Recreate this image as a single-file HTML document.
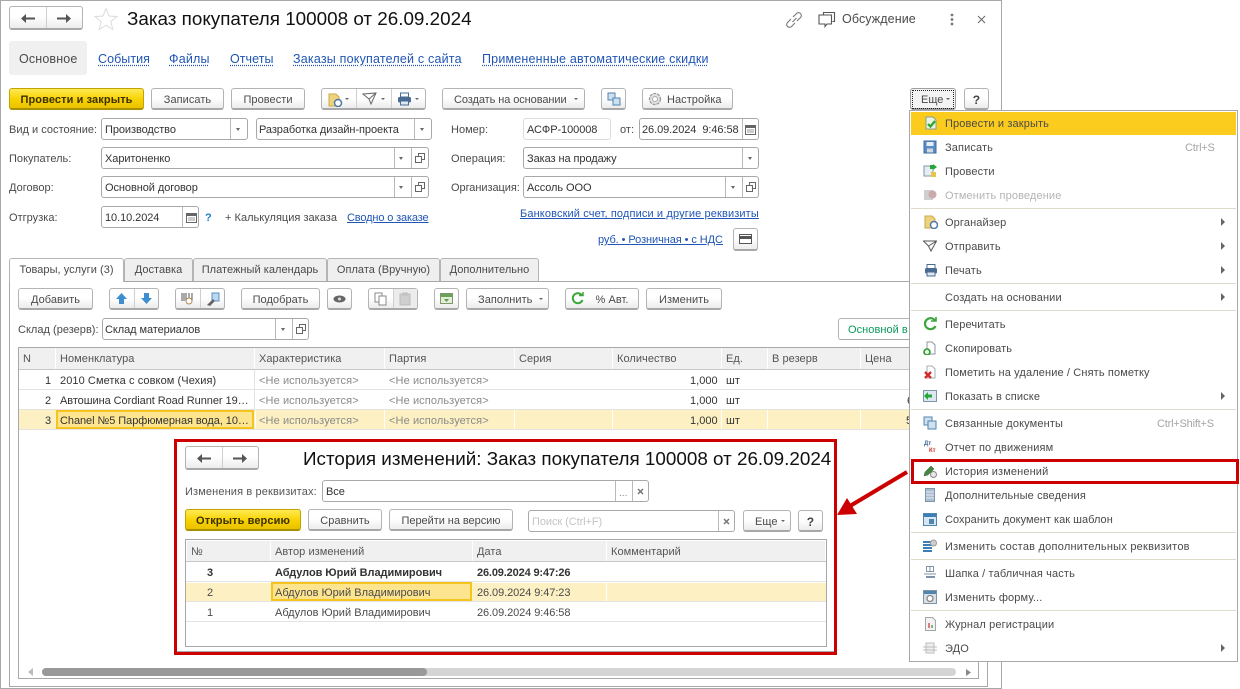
<!DOCTYPE html>
<html lang="ru"><head><meta charset="utf-8"><title>Заказ покупателя</title>
<style>
html,body{margin:0;padding:0;background:#fff}
#p{position:relative;width:1240px;height:689px;overflow:hidden;background:#fff;font:11px/14px "Liberation Sans",Arial,sans-serif;color:#4a4a4a}
#p div,#p span.t,#p svg,#p a{position:absolute}
.t{white-space:nowrap;letter-spacing:.02px;margin-top:1px}
.l{color:#1f55b5;text-decoration:underline;letter-spacing:-.07px}
.d{color:#1f55b5;text-decoration:underline dotted;text-underline-offset:2px;font-size:12.5px}
.b{box-sizing:border-box;border:1px solid #b4b4b4;border-bottom:2px solid #a8a8a8;border-radius:3px;background:linear-gradient(#fff,#fff 45%,#ececec);text-align:center;line-height:22px;white-space:nowrap;letter-spacing:.05px}
.y{border-color:#c4a300;border-bottom-color:#a89000;background:linear-gradient(#ffea55,#f7d200 55%,#eac200);color:#3c3000;font-weight:bold;letter-spacing:.1px}
.f{box-sizing:border-box;border:1px solid #a9a9a9;border-radius:3px;background:#fff;line-height:23px;padding-left:3px;white-space:nowrap;color:#333;letter-spacing:-.07px}
.v{width:1px;background:#b9b9b9}
.c{width:0;height:0;border-left:2.5px solid transparent;border-right:2.5px solid transparent;border-top:3px solid #666}
.w{width:0;height:0;border-top:4px solid transparent;border-bottom:4px solid transparent;border-left:4px solid #666;left:1221px}
.h{background:#f0f0f0;height:20px;line-height:22px;padding-left:4px;box-sizing:border-box;color:#555;letter-spacing:.05px}
.r{height:1px;background:#e3e3e3}
.s{height:1px;background:#e0dccb;left:911px;width:325px}
.t.m{left:945px;color:#4a4a4a;letter-spacing:.13px}
.tab{box-sizing:border-box;top:258px;height:23px;background:#efefef;border:1px solid #b4b4b4;border-bottom:0;border-radius:3px 3px 0 0;text-align:center;line-height:22px;letter-spacing:.04px;white-space:nowrap}
.t.g{color:#8a8a8a;letter-spacing:.1px}
.k{color:#a5a5a5;letter-spacing:-.2px}
</style></head><body><div id="p">

<!-- window frame -->
<div style="left:0;top:0;width:1000px;height:687px;border:1px solid #a8a8a8;border-width:1px 1px 2px 1px;box-sizing:content-box"></div>

<!-- header -->
<div class="b" style="left:9px;top:6px;width:74px;height:24px"></div>
<div class="v" style="left:46px;top:7px;height:21px;background:#cfcfcf"></div>
<svg style="left:21px;top:14px" width="15" height="9"><path d="M0 4.500L5 0V3.500H14V5.500H5V9Z" fill="#555"/></svg>
<svg style="left:57px;top:14px" width="15" height="9"><path d="M14 4.500L9 0V3.500H0V5.500H9V9Z" fill="#555"/></svg>
<svg style="left:94px;top:7px" width="24" height="24"><path d="M12 1.500l3 7.500 8 .6-6.200 5 2 7.900L12 18.200 5.200 22.500l2-7.900L1 9.600l8-.6z" fill="#fff" stroke="#dcdcdc"/></svg>
<span class="t" style="left:127px;top:7px;font-size:18.85px;line-height:22px;color:#111;letter-spacing:0">Заказ покупателя 100008 от 26.09.2024</span>
<svg style="left:785px;top:11px" width="18" height="18" fill="none" stroke="#777" stroke-width="1.100"><path d="M7.500 11l4-4M6 8L2.500 11.500a2.600 2.600 0 0 0 4 4L10 12M8 6l3.500-3.500a2.600 2.600 0 0 1 4 4L12 10"/></svg>
<svg style="left:818px;top:11px" width="18" height="17" fill="none" stroke="#555" stroke-width="1.100"><path d="M5.500 3.500V1.500h11v9h-2M1 4h12.500v9H9l-2 2.500V13H1z" fill="#fff"/></svg>
<span class="t" style="left:842px;top:11px;font-size:12.5px;letter-spacing:.1px">Обсуждение</span>
<svg style="left:949px;top:13px" width="6" height="13" fill="#777"><circle cx="3" cy="2" r="1.400"/><circle cx="3" cy="6.500" r="1.400"/><circle cx="3" cy="11" r="1.400"/></svg>
<svg style="left:977px;top:15px" width="9" height="9" stroke="#666"><path d="M1 1l7 7M8 1L1 8"/></svg>

<!-- page tabs -->
<div style="left:9px;top:41px;width:78px;height:34px;background:#f0f0f0;border-radius:3px"></div>
<span class="t" style="left:19px;top:51px;font-size:12.500px;letter-spacing:.15px">Основное</span>
<span class="t d" style="left:98px;top:51px;letter-spacing:.05px">События</span>
<span class="t d" style="left:169px;top:51px;letter-spacing:.2px">Файлы</span>
<span class="t d" style="left:230px;top:51px;letter-spacing:.05px">Отчеты</span>
<span class="t d" style="left:293px;top:51px;letter-spacing:.2px">Заказы покупателей с сайта</span>
<span class="t d" style="left:482px;top:51px;letter-spacing:.19px">Примененные автоматические скидки</span>

<!-- command bar -->
<div class="b y" style="left:9px;top:88px;width:135px;height:22px">Провести и закрыть</div>
<div class="b" style="left:151px;top:88px;width:73px;height:22px">Записать</div>
<div class="b" style="left:231px;top:88px;width:74px;height:22px">Провести</div>
<div class="b" style="left:321px;top:88px;width:105px;height:22px"></div>
<div class="v" style="left:356px;top:89px;height:19px;background:#cfcfcf"></div>
<div class="v" style="left:391px;top:89px;height:19px;background:#cfcfcf"></div>
<svg style="left:328px;top:93px" width="16" height="14"><path d="M1 1h7l3 3v9H1z" fill="#ecd37c" stroke="#c8a94e"/><circle cx="10" cy="10" r="3.500" fill="#fff" stroke="#4f77a8" stroke-width="1.500"/></svg>
<div class="c" style="left:345px;top:98px;border-left-width:2px;border-right-width:2px;border-top-width:2px"></div>
<svg style="left:362px;top:92px" width="16" height="14" fill="none" stroke="#666"><path d="M1 2l13-1-5 11-2-5zM7 7l7-6"/></svg>
<div class="c" style="left:381px;top:98px;border-left-width:2px;border-right-width:2px;border-top-width:2px"></div>
<svg style="left:397px;top:92px" width="15" height="14"><rect x="3.500" y="1" width="8" height="4" fill="#fff" stroke="#4a6c93"/><rect x="1" y="5" width="13" height="5.500" rx="1.500" fill="#4a6c93"/><rect x="3.500" y="9" width="8" height="4" fill="#dfe7f0" stroke="#4a6c93"/></svg>
<div class="c" style="left:415px;top:98px;border-left-width:2px;border-right-width:2px;border-top-width:2px"></div>
<div class="b" style="left:442px;top:88px;width:143px;height:22px;text-align:left;padding-left:11px;letter-spacing:-.08px">Создать на основании</div>
<div class="c" style="left:574px;top:98px;border-left-width:2px;border-right-width:2px;border-top-width:2px"></div>
<div class="b" style="left:601px;top:88px;width:25px;height:22px"></div>
<svg style="left:607px;top:92px" width="14" height="14"><rect x="1" y="1" width="7" height="7" fill="#cfe0ee" stroke="#4f86b0"/><rect x="6" y="6" width="7" height="7" fill="#cfe0ee" stroke="#4f86b0"/></svg>
<div class="b" style="left:642px;top:88px;width:91px;height:22px;text-align:left;padding-left:24px">Настройка</div>
<svg style="left:648px;top:92px" width="14" height="14"><circle cx="7" cy="7" r="5.500" fill="#e4e4e4" stroke="#9a9a9a" stroke-width="1.300" stroke-dasharray="3 1"/><circle cx="7" cy="7" r="2.500" fill="#fff" stroke="#aaa"/></svg>
<div class="b" style="left:910px;top:88px;width:46px;height:22px;background:#f3f3f3;border-color:#9e9e9e"></div>
<div style="left:912px;top:90px;width:40px;height:17px;border:1px dotted #222"></div>
<span class="t" style="left:921px;top:92px">Еще</span>
<div class="c" style="left:946px;top:98px;border-left-width:2px;border-right-width:2px;border-top-width:2px"></div>
<div class="b" style="left:964px;top:88px;width:25px;height:22px;font-weight:bold;font-size:12px;color:#444">?</div>

<!-- form labels -->
<span class="t" style="left:9px;top:122px">Вид и состояние:</span>
<span class="t" style="left:9px;top:151px">Покупатель:</span>
<span class="t" style="left:9px;top:180px">Договор:</span>
<span class="t" style="left:9px;top:210px">Отгрузка:</span>
<span class="t" style="left:451px;top:122px">Номер:</span>
<span class="t" style="left:451px;top:151px">Операция:</span>
<span class="t" style="left:451px;top:180px;letter-spacing:-.05px">Организация:</span>
<span class="t" style="left:620px;top:122px">от:</span>

<!-- fields -->
<div class="f" style="left:101px;top:118px;width:147px;height:22px">Производство</div><div class="v" style="left:230px;top:119px;height:20px"></div><div class="c" style="left:236px;top:128px"></div>
<div class="f" style="left:256px;top:118px;width:176px;height:22px;padding-left:2px">Разработка дизайн-проекта</div><div class="v" style="left:414px;top:119px;height:20px"></div><div class="c" style="left:420px;top:128px"></div>
<div class="f" style="left:101px;top:147px;width:328px;height:22px">Харитоненко</div><div class="v" style="left:394px;top:148px;height:20px"></div><div class="v" style="left:411px;top:148px;height:20px"></div><div class="c" style="left:399px;top:157px"></div>
<svg style="left:415px;top:153px" width="10" height="10" fill="#fff" stroke="#666"><rect x="3.500" y=".5" width="6" height="6"/><rect x=".5" y="3.500" width="6" height="6"/></svg>
<div class="f" style="left:101px;top:176px;width:328px;height:22px">Основной договор</div><div class="v" style="left:394px;top:177px;height:20px"></div><div class="v" style="left:411px;top:177px;height:20px"></div><div class="c" style="left:399px;top:186px"></div>
<svg style="left:415px;top:182px" width="10" height="10" fill="#fff" stroke="#666"><rect x="3.500" y=".5" width="6" height="6"/><rect x=".5" y="3.500" width="6" height="6"/></svg>
<div class="f" style="left:101px;top:206px;width:98px;height:22px">10.10.2024</div><div class="v" style="left:182px;top:207px;height:20px"></div>
<svg style="left:186px;top:212px" width="11" height="11"><rect x=".5" y="1.500" width="10" height="9" fill="#fff" stroke="#666"/><rect x="1" y="1" width="9" height="3" fill="#666"/><path d="M2 6h7M2 8h7" stroke="#999"/></svg>
<span class="t" style="left:205px;top:210px;color:#1b7fc4;font-weight:bold">?</span>
<span class="t" style="left:225px;top:210px">+ Калькуляция заказа</span>
<span class="t l" style="left:347px;top:210px;letter-spacing:-.14px">Сводно о заказе</span>

<div class="f" style="left:523px;top:118px;width:88px;height:22px;border-color:#dcdcdc">АСФР-100008</div>
<div class="f" style="left:639px;top:118px;width:120px;height:22px;padding-left:2px;">26.09.2024&nbsp; 9:46:58</div><div class="v" style="left:742px;top:119px;height:20px"></div>
<svg style="left:745px;top:124px" width="11" height="11"><rect x=".5" y="1.500" width="10" height="9" fill="#fff" stroke="#666"/><rect x="1" y="1" width="9" height="3" fill="#666"/><path d="M2 6h7M2 8h7" stroke="#999"/></svg>
<div class="f" style="left:523px;top:147px;width:236px;height:22px">Заказ на продажу</div><div class="v" style="left:742px;top:148px;height:20px"></div><div class="c" style="left:748px;top:157px"></div>
<div class="f" style="left:523px;top:176px;width:236px;height:22px">Ассоль ООО</div><div class="v" style="left:725px;top:177px;height:20px"></div><div class="v" style="left:742px;top:177px;height:20px"></div><div class="c" style="left:731px;top:186px"></div>
<svg style="left:746px;top:182px" width="10" height="10" fill="#fff" stroke="#666"><rect x="3.500" y=".5" width="6" height="6"/><rect x=".5" y="3.500" width="6" height="6"/></svg>
<span class="t l" style="left:520px;top:206px;letter-spacing:.13px">Банковский счет, подписи и другие реквизиты</span>
<span class="t l" style="left:598px;top:232px;letter-spacing:-.08px">руб. • Розничная • с НДС</span>
<div class="b" style="left:733px;top:228px;width:25px;height:23px"></div>
<svg style="left:739px;top:234px" width="13" height="11"><rect x=".5" y=".5" width="12" height="9" fill="#fff" stroke="#555"/><rect x="1" y="2" width="11" height="3" fill="#555"/></svg>

<!-- tabs -->
<div style="left:9px;top:281px;width:979px;height:406px;box-sizing:border-box;border:1px solid #a8a8a8"></div>
<div class="tab" style="left:9px;width:115px;background:#fff;height:24px;z-index:2">Товары, услуги (3)</div>
<div class="tab" style="left:124px;width:69px">Доставка</div>
<div class="tab" style="left:193px;width:134px">Платежный календарь</div>
<div class="tab" style="left:327px;width:113px">Оплата (Вручную)</div>
<div class="tab" style="left:440px;width:99px">Дополнительно</div>

<!-- table toolbar -->
<div class="b" style="left:18px;top:288px;width:75px;height:22px">Добавить</div>
<div class="b" style="left:109px;top:288px;width:50px;height:22px"></div><div class="v" style="left:134px;top:289px;height:19px;background:#cfcfcf"></div>
<svg style="left:116px;top:293px" width="11" height="11" fill="#3c8ed0"><path d="M5.500 0L11 6H8v5H3V6H0z"/></svg>
<svg style="left:141px;top:293px" width="11" height="11" fill="#3c8ed0"><path d="M5.500 11L11 5H8V0H3v5H0z"/></svg>
<div class="b" style="left:175px;top:288px;width:50px;height:22px"></div><div class="v" style="left:200px;top:289px;height:19px;background:#cfcfcf"></div>
<svg style="left:181px;top:292px" width="14" height="14"><path d="M1 1v8M3 1v8M5 1v8M8 1v8M11 1v8" stroke="#555"/><circle cx="8" cy="9" r="3" fill="#fff" stroke="#b08a50"/></svg>
<svg style="left:206px;top:292px" width="14" height="14"><rect x="6" y="1" width="7" height="8" fill="#bcd7ef" stroke="#5c92c4"/><path d="M1 13l6-6 2 2-5 5z" fill="#666"/></svg>
<div class="b" style="left:241px;top:288px;width:79px;height:22px">Подобрать</div>
<div class="b" style="left:327px;top:288px;width:25px;height:22px"></div>
<svg style="left:333px;top:295px" width="13" height="8"><ellipse cx="6.500" cy="4" rx="6" ry="3.500" fill="#666"/><circle cx="6.500" cy="4" r="1.500" fill="#ddd"/></svg>
<div class="b" style="left:368px;top:288px;width:50px;height:22px"></div>
<div style="left:394px;top:289px;width:23px;height:19px;background:#ececec"></div>
<div class="v" style="left:393px;top:289px;height:19px;background:#cfcfcf"></div>
<svg style="left:374px;top:292px" width="14" height="14" fill="#fff" stroke="#888"><rect x="1" y="1" width="7" height="9"/><rect x="5" y="4" width="7" height="9"/></svg>
<svg style="left:399px;top:292px" width="13" height="14" fill="#cfcfcf" stroke="#bbb"><rect x="1" y="2" width="10" height="11"/><rect x="4" y="1" width="4" height="2"/></svg>
<div class="b" style="left:434px;top:288px;width:25px;height:22px"></div>
<svg style="left:440px;top:293px" width="13" height="11"><rect x=".5" y=".5" width="12" height="10" fill="#e3ecd8" stroke="#7f9a6a"/><rect x="1" y="1" width="11" height="3" fill="#69a456"/><path d="M4 6h5L6.500 9z" fill="#5d9a4a"/></svg>
<div class="b" style="left:466px;top:288px;width:83px;height:22px;text-align:left;padding-left:11px">Заполнить</div>
<div class="c" style="left:539px;top:298px;border-left-width:2px;border-right-width:2px;border-top-width:2px"></div>
<div class="b" style="left:565px;top:288px;width:74px;height:22px;padding-left:20px">% Авт.</div>
<svg style="left:571px;top:292px" width="13" height="13" fill="none" stroke="#3aa63a" stroke-width="2"><path d="M11 3.500A5 5 0 1 0 11.500 8"/><path d="M8 3.500h4V0" stroke-width="1.500"/></svg>
<div class="b" style="left:646px;top:288px;width:76px;height:22px">Изменить</div>

<span class="t" style="left:18px;top:322px">Склад (резерв):</span>
<div class="f" style="left:102px;top:318px;width:207px;height:22px;padding-left:2px">Склад материалов</div><div class="v" style="left:275px;top:319px;height:20px"></div><div class="v" style="left:292px;top:319px;height:20px"></div><div class="c" style="left:281px;top:328px"></div>
<svg style="left:296px;top:324px" width="10" height="10" fill="#fff" stroke="#666"><rect x="3.500" y=".5" width="6" height="6"/><rect x=".5" y="3.500" width="6" height="6"/></svg>
<div class="b" style="left:838px;top:318px;width:100px;height:22px;background:#fff;text-align:left;padding-left:9px;color:#0a9a5a;border-bottom-width:1px">Основной в</div>

<!-- main table -->
<div style="left:18px;top:347px;width:961px;height:332px;box-sizing:border-box;border:1px solid #a8a8a8"></div>
<div class="h" style="left:19px;top:348px;width:36px;height:21px">N</div>
<div class="h" style="left:56px;top:348px;width:198px;height:21px">Номенклатура</div>
<div class="h" style="left:255px;top:348px;width:129px;height:21px">Характеристика</div>
<div class="h" style="left:385px;top:348px;width:129px;height:21px">Партия</div>
<div class="h" style="left:515px;top:348px;width:97px;height:21px">Серия</div>
<div class="h" style="left:613px;top:348px;width:108px;height:21px">Количество</div>
<div class="h" style="left:722px;top:348px;width:45px;height:21px">Ед.</div>
<div class="h" style="left:768px;top:348px;width:92px;height:21px">В резерв</div>
<div class="h" style="left:861px;top:348px;width:117px;height:21px">Цена</div>
<div style="left:19px;top:369px;width:959px;height:1px;background:#c8c8c8"></div>
<div class="r" style="left:19px;top:389px;width:959px"></div>
<div class="r" style="left:19px;top:409px;width:959px"></div>
<div class="r" style="left:19px;top:429px;width:959px"></div>
<div class="v" style="left:254px;top:370px;height:39px;background:#e3e3e3"></div>
<div style="left:19px;top:410px;width:959px;height:19px;background:#fdf0c2"></div>
<div style="left:56px;top:410px;width:198px;height:19px;box-sizing:border-box;background:#fde48e;border:2px solid #f5c41f"></div>
<div class="v" style="left:384px;top:410px;height:19px;background:#fff"></div>
<div class="v" style="left:514px;top:410px;height:19px;background:#fff"></div>
<div class="v" style="left:612px;top:410px;height:19px;background:#fff"></div>
<div class="v" style="left:721px;top:410px;height:19px;background:#fff"></div>
<div class="v" style="left:767px;top:410px;height:19px;background:#fff"></div>
<div class="v" style="left:860px;top:410px;height:19px;background:#fff"></div>
<div class="v" style="left:255px;top:410px;height:19px;background:#fff"></div>
<span class="t" style="left:45px;top:373px;color:#333">1</span><span class="t" style="left:60px;top:373px;color:#333;letter-spacing:.08px">2010 Сметка с совком (Чехия)</span>
<span class="t" style="left:45px;top:393px;color:#333">2</span><span class="t" style="left:60px;top:393px;color:#333;letter-spacing:-.06px">Автошина Cordiant Road Runner 19…</span>
<span class="t" style="left:45px;top:413px;color:#333">3</span><span class="t" style="left:60px;top:413px;color:#333;letter-spacing:-.06px">Chanel №5 Парфюмерная вода, 10…</span>
<span class="t g" style="left:259px;top:373px">&lt;Не используется&gt;</span><span class="t g" style="left:389px;top:373px">&lt;Не используется&gt;</span>
<span class="t g" style="left:259px;top:393px">&lt;Не используется&gt;</span><span class="t g" style="left:389px;top:393px">&lt;Не используется&gt;</span>
<span class="t g" style="left:259px;top:413px">&lt;Не используется&gt;</span><span class="t g" style="left:389px;top:413px">&lt;Не используется&gt;</span>
<span class="t" style="left:690px;top:373px;color:#333">1,000</span><span class="t" style="left:726px;top:373px;color:#333">шт</span>
<span class="t" style="left:690px;top:393px;color:#333">1,000</span><span class="t" style="left:726px;top:393px;color:#333">шт</span>
<span class="t" style="left:690px;top:413px;color:#333">1,000</span><span class="t" style="left:726px;top:413px;color:#333">шт</span>
<span class="t" style="left:907px;top:393px;color:#333">6</span><span class="t" style="left:906px;top:413px;color:#333">5</span>

<!-- scrollbar -->
<svg style="left:28px;top:668px" width="6" height="8"><path d="M5 0v8L0 4z" fill="#bbb"/></svg>
<div style="left:42px;top:668px;width:914px;height:8px;background:#d4d4d4;border-radius:4px"></div>
<div style="left:42px;top:668px;width:385px;height:8px;background:#999;border-radius:4px"></div>
<svg style="left:966px;top:669px" width="5" height="7"><path d="M0 0v7l5-3.500z" fill="#888"/></svg>

<!-- history dialog -->
<div style="left:174px;top:439px;width:663px;height:216px;box-sizing:border-box;border:3px solid #cc0000;background:#fff;box-shadow:inset 0 -1px 0 #aaa"></div>
<div class="b" style="left:185px;top:446px;width:74px;height:24px"></div>
<div class="v" style="left:222px;top:447px;height:21px;background:#cfcfcf"></div>
<svg style="left:197px;top:454px" width="15" height="9"><path d="M0 4.500L5 0V3.500H14V5.500H5V9Z" fill="#555"/></svg>
<svg style="left:233px;top:454px" width="15" height="9"><path d="M14 4.500L9 0V3.500H0V5.500H9V9Z" fill="#555"/></svg>
<span class="t" style="left:303px;top:447px;font-size:18.85px;line-height:22px;color:#111;letter-spacing:0">История изменений: Заказ покупателя 100008 от 26.09.2024</span>
<span class="t" style="left:185px;top:484px;color:#555;letter-spacing:.13px">Изменения в реквизитах:</span>
<div class="f" style="left:322px;top:480px;width:327px;height:22px">Все</div><div class="v" style="left:615px;top:481px;height:20px"></div><div class="v" style="left:632px;top:481px;height:20px"></div>
<span class="t" style="left:619px;top:486px;color:#888;font-size:10px">...</span>
<svg style="left:637px;top:488px" width="7" height="7" stroke="#777" stroke-width="1.500"><path d="M1 1l5 5M6 1L1 6"/></svg>
<div class="b y" style="left:185px;top:509px;width:116px;height:22px">Открыть версию</div>
<div class="b" style="left:308px;top:509px;width:74px;height:22px">Сравнить</div>
<div class="b" style="left:389px;top:509px;width:124px;height:22px;letter-spacing:-.05px">Перейти на версию</div>
<div class="f" style="left:528px;top:510px;width:207px;height:22px;color:#c4c4c4">Поиск (Ctrl+F)</div><div class="v" style="left:718px;top:511px;height:20px"></div>
<svg style="left:723px;top:518px" width="7" height="7" stroke="#777" stroke-width="1.500"><path d="M1 1l5 5M6 1L1 6"/></svg>
<div class="b" style="left:743px;top:510px;width:48px;height:22px;text-align:left;padding-left:11px">Еще</div>
<div class="c" style="left:781px;top:520px;border-left-width:2px;border-right-width:2px;border-top-width:2px"></div>
<div class="b" style="left:798px;top:510px;width:25px;height:22px;font-weight:bold;font-size:12px;color:#444">?</div>

<div style="left:185px;top:539px;width:642px;height:108px;box-sizing:border-box;border:1px solid #a8a8a8"></div>
<div class="h" style="left:187px;top:541px;width:83px;height:20px">№</div>
<div class="h" style="left:271px;top:541px;width:201px;height:20px">Автор изменений</div>
<div class="h" style="left:473px;top:541px;width:133px;height:20px">Дата</div>
<div class="h" style="left:607px;top:541px;width:218px;height:20px">Комментарий</div>
<div style="left:186px;top:561px;width:640px;height:1px;background:#c8c8c8"></div>
<div class="r" style="left:186px;top:581px;width:640px"></div>
<div class="r" style="left:186px;top:601px;width:640px"></div>
<div class="r" style="left:186px;top:621px;width:640px"></div>
<div style="left:186px;top:583px;width:640px;height:18px;background:#fdf0c2"></div>
<div style="left:271px;top:582px;width:201px;height:19px;box-sizing:border-box;background:#fde48e;border:2px solid #f5c41f"></div>
<div class="v" style="left:606px;top:583px;height:18px;background:#fff"></div>
<span class="t" style="left:207px;top:565px;font-weight:bold;color:#333">3</span>
<span class="t" style="left:275px;top:565px;font-weight:bold;color:#333;letter-spacing:-.06px">Абдулов Юрий Владимирович</span>
<span class="t" style="left:477px;top:565px;font-weight:bold;color:#333;letter-spacing:-.15px">26.09.2024 9:47:26</span>
<span class="t" style="left:207px;top:585px">2</span>
<span class="t" style="left:275px;top:585px">Абдулов Юрий Владимирович</span>
<span class="t" style="left:477px;top:585px;letter-spacing:-.08px">26.09.2024 9:47:23</span>
<span class="t" style="left:207px;top:605px">1</span>
<span class="t" style="left:275px;top:605px">Абдулов Юрий Владимирович</span>
<span class="t" style="left:477px;top:605px;letter-spacing:-.08px">26.09.2024 9:46:58</span>

<!-- arrow -->
<svg style="left:830px;top:465px" width="85" height="60"><path d="M77 7L20 41" stroke="#cc0000" stroke-width="4" fill="none"/><path d="M7 50L17 33 27 49z" fill="#cc0000"/></svg>

<!-- menu -->
<div style="left:909px;top:110px;width:329px;height:552px;box-sizing:border-box;background:#fff;border:1px solid #a8a8a8"></div>
<div style="left:911px;top:112px;width:325px;height:23px;background:#fbcb1e"></div>
<div class="s" style="top:208px"></div><div class="s" style="top:283px"></div><div class="s" style="top:310px"></div><div class="s" style="top:409px"></div><div class="s" style="top:532px"></div><div class="s" style="top:559px"></div><div class="s" style="top:610px"></div>

<span class="t m" style="top:116px">Провести и закрыть</span>
<span class="t m" style="top:140px">Записать</span><span class="t k" style="left:1185px;top:140px">Ctrl+S</span>
<span class="t m" style="top:164px">Провести</span>
<span class="t m" style="top:188px;color:#b4b4b4">Отменить проведение</span>
<span class="t m" style="top:215px">Органайзер</span>
<span class="t m" style="top:239px">Отправить</span>
<span class="t m" style="top:263px">Печать</span>
<span class="t m" style="top:290px">Создать на основании</span>
<span class="t m" style="top:317px">Перечитать</span>
<span class="t m" style="top:341px">Скопировать</span>
<span class="t m" style="top:365px">Пометить на удаление / Снять пометку</span>
<span class="t m" style="top:389px">Показать в списке</span>
<span class="t m" style="top:416px">Связанные документы</span><span class="t k" style="left:1157px;top:416px">Ctrl+Shift+S</span>
<span class="t m" style="top:440px">Отчет по движениям</span>
<span class="t m" style="top:464px">История изменений</span>
<span class="t m" style="top:488px">Дополнительные сведения</span>
<span class="t m" style="top:512px;letter-spacing:.03px">Сохранить документ как шаблон</span>
<span class="t m" style="top:539px;letter-spacing:.23px">Изменить состав дополнительных реквизитов</span>
<span class="t m" style="top:566px">Шапка / табличная часть</span>
<span class="t m" style="top:590px">Изменить форму...</span>
<span class="t m" style="top:617px">Журнал регистрации</span>
<span class="t m" style="top:641px">ЭДО</span>
<div class="w" style="top:218px"></div><div class="w" style="top:242px"></div><div class="w" style="top:266px"></div><div class="w" style="top:293px"></div><div class="w" style="top:392px"></div><div class="w" style="top:644px"></div>

<!-- menu icons -->
<svg style="left:924px;top:116px" width="14" height="14"><path d="M2 1h7l3 3v9H2z" fill="#e8f3e4" stroke="#8e9f8a"/><path d="M4 8l2.500 2.500L11 5" stroke="#2aa52a" stroke-width="2.200" fill="none"/></svg>
<svg style="left:923px;top:140px" width="14" height="14"><rect x="1" y="1" width="12" height="12" fill="#5b8cc5" stroke="#3f6da3"/><rect x="3.500" y="2" width="7" height="4" fill="#e8eef6"/><rect x="4" y="8.500" width="6" height="4" fill="#d0d8e2"/></svg>
<svg style="left:923px;top:164px" width="14" height="14"><rect x="1" y="2" width="9" height="10" fill="#e7eef3" stroke="#7f96a8"/><path d="M7 1h3V0l4 3-4 3V5H7z" fill="#24a83c"/><rect x="8" y="8" width="5" height="5" fill="#e7c647"/></svg>
<svg style="left:923px;top:188px" width="14" height="14"><rect x="1" y="2" width="9" height="10" fill="#cfcfcf"/><circle cx="9.500" cy="6.500" r="4" fill="#c9abab"/></svg>
<svg style="left:924px;top:215px" width="14" height="14"><path d="M1 1h7l3 3v9H1z" fill="#ecd37c" stroke="#c8a94e"/><circle cx="10" cy="10" r="3.500" fill="#fff" stroke="#4f77a8" stroke-width="1.500"/></svg>
<svg style="left:923px;top:240px" width="14" height="12" fill="none" stroke="#555"><path d="M.5 1h13L8 11 5.500 6zM5.500 6l8-5"/></svg>
<svg style="left:924px;top:264px" width="14" height="13"><rect x="3" y=".5" width="8" height="4" fill="#fff" stroke="#4a6c93"/><rect x="1" y="4" width="12" height="5.500" rx="1.500" fill="#4a6c93"/><rect x="3" y="8" width="8" height="4" fill="#dfe7f0" stroke="#4a6c93"/></svg>
<svg style="left:923px;top:317px" width="14" height="14" fill="none" stroke="#3aa63a" stroke-width="2.200"><path d="M12 3.500A5.500 5.500 0 1 0 12.500 9"/><path d="M8 4h5V0" stroke-width="1.600"/></svg>
<svg style="left:923px;top:341px" width="14" height="14"><path d="M4 1h5l3 3v9H4z" fill="#fff" stroke="#8e9aa5"/><circle cx="4" cy="11" r="3" fill="#e8f3e4" stroke="#2f9a2f" stroke-width="1.600"/></svg>
<svg style="left:923px;top:365px" width="14" height="14"><path d="M4 1h5l3 3v9H4z" fill="#fff" stroke="#a3acb5"/><path d="M2 7l6 6M8 7l-6 6" stroke="#d32a2a" stroke-width="2.400"/></svg>
<svg style="left:923px;top:390px" width="14" height="12"><rect x=".5" y=".5" width="13" height="11" fill="#dde7ef" stroke="#7f96a8"/><path d="M1 6l4-4v2.500h4v3H5V10z" fill="#24a83c"/></svg>
<svg style="left:923px;top:416px" width="14" height="14"><rect x="1" y="1" width="8" height="8" fill="#cfe0ee" stroke="#4f86b0"/><rect x="5" y="5" width="8" height="8" fill="#cfe0ee" stroke="#4f86b0"/></svg>
<span class="t" style="left:924px;top:440px;font-size:6px;line-height:6px;font-weight:bold;color:#44688f;letter-spacing:0">Дт</span>
<span class="t" style="left:929px;top:447px;font-size:6px;line-height:6px;font-weight:bold;color:#c8322a;letter-spacing:0">Кт</span>
<svg style="left:923px;top:464px" width="14" height="14"><path d="M1 12l1-4 6-6 3 3-6 6z" fill="#3f8a3f" stroke="#555" stroke-width=".5"/><circle cx="10.500" cy="10.500" r="3" fill="#e8e8e8" stroke="#888"/></svg>
<svg style="left:925px;top:488px" width="10" height="14"><rect x=".5" y=".5" width="9" height="13" fill="#a9bdd0" stroke="#7f96a8"/><path d="M1 4h8M1 7h8M1 10h8" stroke="#e6edf3"/></svg>
<svg style="left:923px;top:512px" width="14" height="14"><rect x=".5" y="1.500" width="13" height="12" fill="#d9e6f1" stroke="#4f86b0"/><rect x="1" y="2" width="12" height="3" fill="#3e7eb6"/><rect x="6" y="7" width="5" height="5" fill="#4f86b0"/></svg>
<svg style="left:923px;top:539px" width="14" height="14"><path d="M0 3h9M0 6h9M0 9h9M0 12h9" stroke="#3e7eb6" stroke-width="2"/><circle cx="10.500" cy="4" r="3" fill="#cfcfcf" stroke="#9a9a9a"/></svg>
<svg style="left:924px;top:566px" width="12" height="13" fill="none" stroke="#7e93a8"><rect x="2.500" y=".5" width="7" height="5"/><path d="M6 1v4M0 8h12"/><path d="M2 11h9" stroke-width="2"/></svg>
<svg style="left:923px;top:590px" width="14" height="14"><rect x=".5" y=".5" width="13" height="13" fill="#d9e0e6" stroke="#7f96a8"/><rect x="1" y="1" width="12" height="3" fill="#4f86b0"/><circle cx="7" cy="8.500" r="3" fill="#fff" stroke="#8a8a8a" stroke-width="1.300"/></svg>
<svg style="left:925px;top:617px" width="11" height="14"><path d="M.5.5h7l3 3v10H.500z" fill="#f3f3f3" stroke="#a5a5a5"/><rect x="3" y="6" width="2" height="5" fill="#d97f7f"/><rect x="6" y="8" width="2" height="3" fill="#86b586"/></svg>
<svg style="left:923px;top:641px" width="14" height="14"><rect x="3" y="2" width="8" height="10" fill="#eee" stroke="#bcbcbc"/><path d="M0 6h14M0 9h14" stroke="#bcbcbc"/></svg>

<!-- red highlight -->
<div style="left:911px;top:459px;width:328px;height:25px;box-sizing:border-box;border:3px solid #cc0000"></div>

</div></body></html>
